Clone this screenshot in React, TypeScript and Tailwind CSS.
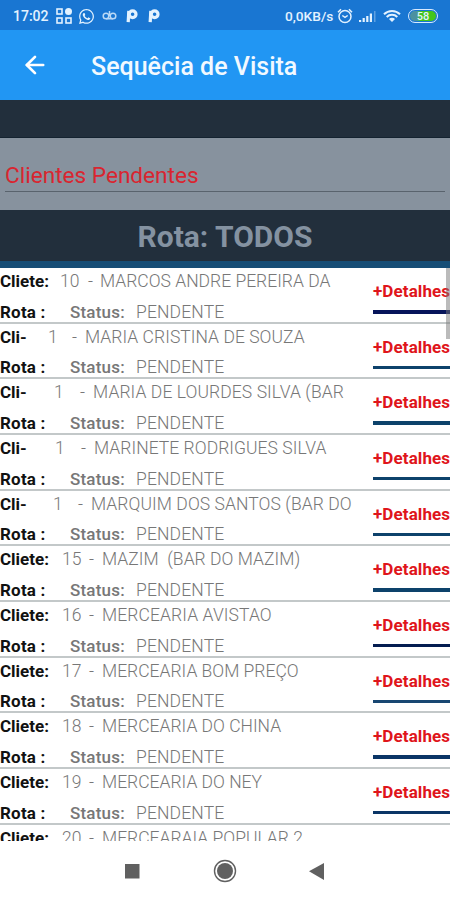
import { ArrowLeft } from 'lucide-react';
import { FaWhatsapp } from 'react-icons/fa';

interface IClient {
  label: string;
  code: string;
  name: string;
  // Column widths of the label, the code and the dash
  cols: string;
  spacing: string;
  underline: string;
}

const wide = 'grid-cols-[62px_27px_13px_1fr]';

const clients: IClient[] = [
  { label: 'Cliete:', code: '10', name: 'MARCOS ANDRE PEREIRA DA', cols: 'grid-cols-[60px_28px_12px_1fr]', spacing: 'tracking-normal', underline: 'bg-[#06145a]' },
  { label: 'Cli-', code: '1', name: 'MARIA CRISTINA DE SOUZA', cols: 'grid-cols-[48px_24px_13px_1fr]', spacing: 'tracking-[0.04px]', underline: 'bg-[#0d426b]' },
  { label: 'Cli-', code: '1', name: 'MARIA DE LOURDES SILVA (BAR', cols: 'grid-cols-[54px_26px_13px_1fr]', spacing: 'tracking-[0.08px]', underline: 'bg-[#0d426b]' },
  { label: 'Cli-', code: '1', name: 'MARINETE RODRIGUES SILVA', cols: 'grid-cols-[55px_26px_13px_1fr]', spacing: 'tracking-[0.04px]', underline: 'bg-[#0d426b]' },
  { label: 'Cli-', code: '1', name: 'MARQUIM DOS SANTOS (BAR DO', cols: 'grid-cols-[53px_25px_13px_1fr]', spacing: 'tracking-[0.07px]', underline: 'bg-[#0d426b]' },
  { label: 'Cliete:', code: '15', name: 'MAZIM  (BAR DO MAZIM)', cols: wide, spacing: 'tracking-[0.03px]', underline: 'bg-[#0d426b]' },
  { label: 'Cliete:', code: '16', name: 'MERCEARIA AVISTAO', cols: wide, spacing: 'tracking-[0.1px]', underline: 'bg-[#041d50]' },
  { label: 'Cliete:', code: '17', name: 'MERCEARIA BOM PREÇO', cols: wide, spacing: 'tracking-normal', underline: 'bg-[#184772]' },
  { label: 'Cliete:', code: '18', name: 'MERCEARIA DO CHINA', cols: wide, spacing: 'tracking-normal', underline: 'bg-[#0a3566]' },
  { label: 'Cliete:', code: '19', name: 'MERCEARIA DO NEY', cols: wide, spacing: 'tracking-normal', underline: 'bg-[#0a3566]' },
  { label: 'Cliete:', code: '20', name: 'MERCEARAIA POPULAR 2', cols: wide, spacing: 'tracking-normal', underline: 'bg-[#0a3566]' },
];

// Notification glyph of the music app
const NotificationMark = () => (
  <svg className="h-[14px] w-[12px]" viewBox="0 0 12 14" fill="none" stroke="currentColor">
    <circle cx="6.6" cy="5.2" r="3.4" strokeWidth="3.2" />
    <path d="M2.8 1.8 2.2 13.2" strokeWidth="3.2" />
  </svg>
);

const StatusBar = () => (
  <div className="flex h-[30px] items-center bg-[#1976d2] pt-[2px] pl-[13px] text-[#e3f2ff]">
    <span className="w-[43px] text-[14px] font-medium">17:02</span>
    <svg className="h-4 w-4" viewBox="0 0 16 16" fill="none" stroke="currentColor" strokeWidth="1.6">
      <rect x="1" y="1" width="5" height="5" />
      <rect x="1" y="10" width="5" height="5" />
      <rect x="10" y="10" width="5" height="5" />
      <circle cx="12.5" cy="3.5" r="3.5" fill="currentColor" stroke="none" />
    </svg>
    <FaWhatsapp className="ml-[6px] h-[17px] w-[17px]" />
    <svg className="ml-[7px] h-[15px] w-[15px] opacity-80" viewBox="0 0 15 15" fill="none" stroke="currentColor" strokeWidth="1.5">
      <circle cx="4" cy="7" r="2.8" />
      <circle cx="11" cy="7" r="2.8" />
      <path d="M4 9.8h7M7.5 2v5" />
    </svg>
    <div className="ml-[9px] flex gap-[10px]">
      <NotificationMark />
      <NotificationMark />
    </div>
    <span className="ml-[125px] w-[52px] text-[13.7px] font-medium whitespace-nowrap">0,0KB/s</span>
    <svg className="h-4 w-4" viewBox="0 0 16 16" fill="none" stroke="currentColor" strokeWidth="1.5">
      <circle cx="8" cy="8.5" r="6" />
      <path d="M1 4.2 4 1.2M15 4.2 12 1.2M5.3 7.5 8 9.4l2.7-1.9" />
    </svg>
    <svg className="ml-[6px] h-[14px] w-[18px]" viewBox="0 0 18 14" fill="currentColor">
      <path d="M0 11h2.2v2H0zM3.6 9h2.2v4H3.6zM7.2 7h2.2v6H7.2zM10.8 4.5H13V13h-2.2z" />
      <path d="M15 2h1.5v11H15z" opacity="0.35" />
    </svg>
    {/* Wi-Fi */}
    <svg className="ml-[6px] h-[14px] w-[18px]" viewBox="0 0 18 14" fill="none" stroke="currentColor" strokeWidth="2">
      <path d="M1 5.2a11.5 11.5 0 0 1 16 0M3.7 8a7.5 7.5 0 0 1 10.6 0" />
      <path d="M6 10a4.2 4.2 0 0 1 6 0l-3 3z" fill="currentColor" stroke="none" />
    </svg>
    <div className="ml-[7px] flex h-[14px] w-[30px] rounded-full border-[1.5px] border-[#d8eaff] p-px">
      <div className="flex w-full items-center justify-center rounded-full bg-linear-to-r from-[#4c91a0] from-25% to-[#43c51c] to-40% text-[11px] leading-none font-medium">58</div>
    </div>
  </div>
);

const ClientRow = ({ client }: { client: IClient }) => (
  <div className="flex h-[55.67px] shrink-0 border-b-2 border-[#c3c8c9]">
    <div className="flex w-[373px] flex-col text-[17.5px] leading-[20px] text-[#777]">
      <div className={`grid h-[31.2px] pt-[3px] whitespace-pre ${client.cols}`}>
        <span className="text-[17px] font-bold text-[#111]">{client.label}</span>
        <span className="font-light">{client.code}</span>
        <span className="font-light">-</span>
        <span className={`font-light ${client.spacing}`}>{client.name}</span>
      </div>
      <div className="grid grid-cols-[70px_66px_1fr] pt-[3px]">
        <span className="text-[17px] font-bold tracking-[0.2px] text-[#111]">Rota :</span>
        <span className="text-[17px] font-medium tracking-[0.2px]">Status:</span>
        <span className="font-light tracking-[0.15px]">PENDENTE</span>
      </div>
    </div>
    <div className="flex w-[77px] flex-col pt-[13px]">
      <span className="h-[29px] text-[17px] leading-[20px] font-bold tracking-[0.1px] whitespace-nowrap text-[#df151b]">+Detalhes</span>
      <div className={`h-[3.5px] ${client.underline}`} />
    </div>
  </div>
);

export default function App() {
  return (
    <div className="flex h-[900px] w-[450px] flex-col overflow-hidden bg-white font-[Roboto,sans-serif]">
      <StatusBar />

      {/* Toolbar */}
      <header className="flex h-[70px] shrink-0 items-center bg-[#2196f3] pl-[21px] text-white">
        <ArrowLeft className="h-7 w-7" strokeWidth={2.3} />
        <h1 className="ml-[42px] pt-[4px] text-[25px] font-medium text-[#f2f9ff]">Sequêcia de Visita</h1>
      </header>

      <div className="h-[38px] shrink-0 border-b border-[#142330] bg-[#222f3c]" />

      {/* Filter */}
      <div className="h-[72px] shrink-0 bg-[#87929e] px-[5px] pt-[23px]">
        <div className="h-[31px] border-b-[1.5px] border-[#59636d] text-[22.6px] leading-[29px] text-[#d92530]">Clientes Pendentes</div>
      </div>

      <div className="flex h-[58px] shrink-0 items-center justify-center border-b-[7px] border-[#174e76] bg-[#222f3c] pt-px text-[30px] font-bold text-[#8492a1]">
        Rota: TODOS
      </div>

      {/* Client list */}
      <main className="relative flex h-[573px] shrink-0 flex-col overflow-hidden">
        {clients.map((client) => (
          <ClientRow key={client.code + client.name} client={client} />
        ))}
        <div className="absolute top-0 right-0 h-[71px] w-[4px] bg-[#777]/50" />
      </main>

      {/* Navigation bar */}
      <nav className="flex h-[59px] shrink-0 items-center justify-center">
        <svg className="h-6 w-[210px]" viewBox="0 0 210 24" fill="#606060">
          <rect x="5" y="5" width="14.5" height="14.5" />
          <circle cx="105" cy="12" r="8" />
          <circle cx="105" cy="12" r="10.5" fill="none" stroke="#606060" strokeWidth="1.4" />
          <path d="M189 12.3 204 4v17z" />
        </svg>
      </nav>
    </div>
  );
}
